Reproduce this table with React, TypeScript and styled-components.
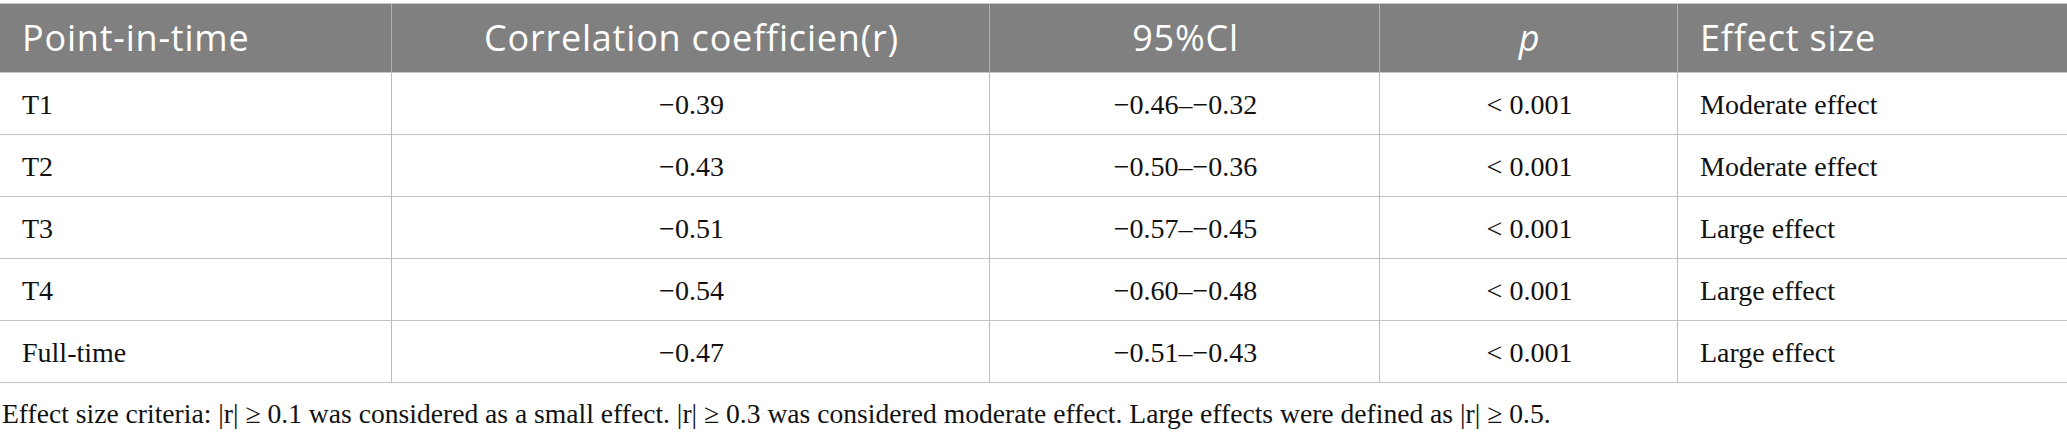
import * as React from 'react';
import styled, { createGlobalStyle } from 'styled-components';

type Align = 'left' | 'center';

interface Column {
  label: React.ReactNode;
  align: Align;
}

const columns: Column[] = [
  { label: 'Point-in-time', align: 'left' },
  { label: 'Correlation coefficien(r)', align: 'center' },
  { label: '95%Cl', align: 'center' },
  { label: <i>p</i>, align: 'center' },
  { label: 'Effect size', align: 'left' },
];

const rows: string[][] = [
  ['T1', '\u22120.39', '\u22120.46\u2013\u22120.32', '< 0.001', 'Moderate effect'],
  ['T2', '\u22120.43', '\u22120.50\u2013\u22120.36', '< 0.001', 'Moderate effect'],
  ['T3', '\u22120.51', '\u22120.57\u2013\u22120.45', '< 0.001', 'Large effect'],
  ['T4', '\u22120.54', '\u22120.60\u2013\u22120.48', '< 0.001', 'Large effect'],
  ['Full-time', '\u22120.47', '\u22120.51\u2013\u22120.43', '< 0.001', 'Large effect'],
];

const App: React.FC = () => (
  <>
    <GlobalStyle />
    <Page>
      <Table>
        {columns.map((col, i) => (
          <HeadCell key={i} $align={col.align}>
            {col.label}
          </HeadCell>
        ))}
        {rows.map((row, r) =>
          row.map((value, c) => (
            <Cell key={`${r}-${c}`} $align={columns[c].align}>
              {value}
            </Cell>
          ))
        )}
      </Table>
      <Note>
        Effect size criteria: |r| &ge; 0.1 was considered as a small effect. |r| &ge; 0.3 was
        considered moderate effect. Large effects were defined as |r| &ge; 0.5.
      </Note>
    </Page>
  </>
);

const GlobalStyle = createGlobalStyle`
  html, body {
    margin: 0;
    padding: 0;
    background: #ffffff;
  }
  * {
    box-sizing: border-box;
  }
`;

const Page = styled.div`
  width: 2067px;
  padding-top: 3px;
`;

const Table = styled.div`
  display: grid;
  grid-template-columns: 391px 598px 390px 298px 390px;
  border-top: 1px solid #c9c9c9;
`;

const HeadCell = styled.div<{ $align: Align }>`
  height: 69px;
  display: flex;
  align-items: center;
  justify-content: ${(p) => (p.$align === 'center' ? 'center' : 'flex-start')};
  padding: 0 20px 1px 22px;
  background: #7f807f;
  color: #ffffff;
  font-family: 'Open Sans', 'Noto Sans', sans-serif;
  font-size: 36px;
  letter-spacing: 0.8px;
  white-space: nowrap;
  border-bottom: 1px solid #c6c6c6;

  & + & {
    border-left: 1px solid #b0b0b0;
  }

  i {
    font-style: italic;
  }
`;

const Cell = styled.div<{ $align: Align }>`
  height: 62px;
  display: flex;
  align-items: center;
  justify-content: ${(p) => (p.$align === 'center' ? 'center' : 'flex-start')};
  padding: 3px 20px 0 22px;
  color: #111111;
  font-family: 'Liberation Serif', 'Times New Roman', serif;
  font-size: 28px;
  white-space: nowrap;
  border-bottom: 1px solid #c2c2c2;

  &:not(:nth-child(5n + 1)) {
    border-left: 1px solid #bdbdbd;
  }
`;

const Note = styled.p`
  margin: 15px 0 0;
  padding-left: 2px;
  color: #111111;
  font-family: 'Liberation Serif', 'Times New Roman', serif;
  font-size: 27.6px;
  line-height: 32px;
  white-space: nowrap;
`;

export default App;
